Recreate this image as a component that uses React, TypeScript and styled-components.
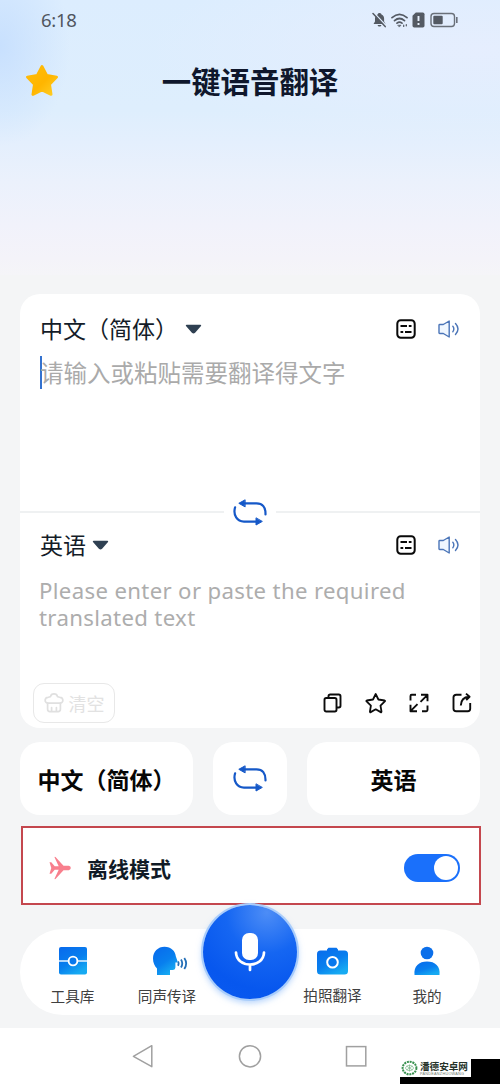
import React from 'react';
import styled, { createGlobalStyle } from 'styled-components';

const Global = createGlobalStyle`
  *, *::before, *::after { box-sizing: border-box; }
  body { margin: 0; background: #f4f5f6; font-family: "Noto Sans", "Noto Sans CJK SC", sans-serif; }
  svg { display: block; flex: none; }
`;

const Screen = styled.div`
  width: 500px;
  height: 1084px;
  display: flex;
  flex-direction: column;
  background: #f4f5f6;
  overflow: hidden;
`;

const Hero = styled.header`
  height: 275px;
  flex: none;
  background:
    radial-gradient(ellipse 70px 100px at 0 46px, #c8e0fe 0%, rgba(200, 224, 254, 0) 100%),
    radial-gradient(ellipse 330px 100px at 480px 50px, rgba(230, 238, 254, 0.95) 0%, rgba(230, 238, 254, 0) 100%),
    linear-gradient(180deg, #dcedfe 0%, #deeefd 40%, #e4effd 52%, #ebf1fc 66%, #f1f2fb 82%, #f4f3f9 94%, #f5f5f8 100%);
`;

const StatusBar = styled.div`
  height: 38px;
  padding: 2px 41px 0 41px;
  display: flex;
  align-items: center;
  justify-content: space-between;
`;

const Clock = styled.span`
  font: 400 18.5px/36px "Noto Sans", sans-serif;
  letter-spacing: -0.3px;
  color: #50565f;
`;

const StatusIcons = styled.div`
  display: flex;
  align-items: center;
  gap: 4px;
`;

const TitleBar = styled.div`
  display: grid;
  grid-template-columns: 84px 1fr 84px;
  align-items: center;
  height: 86px;
  svg { margin-left: 25px; }
`;

const Title = styled.h1`
  margin: 0 0 3px;
  text-align: center;
  font: 700 29.4px/44px "Noto Sans CJK SC", sans-serif;
  color: #0f172c;
  white-space: nowrap;
`;

const Card = styled.main`
  margin: 19px 20px 0;
  height: 434px;
  flex: none;
  border-radius: 20px;
  background: #fff;
  display: flex;
  flex-direction: column;
  position: relative;
`;

const Pane = styled.section<{ $height: number }>`
  height: ${(p) => p.$height}px;
  padding: 0 20px;
  display: flex;
  flex-direction: column;
  & + & { border-top: 2px solid #eff1f2; }
`;

const PaneHead = styled.div<{ $top: number }>`
  margin-top: ${(p) => p.$top}px;
  height: 36px;
  display: flex;
  align-items: center;
  justify-content: space-between;
`;

const Language = styled.div<{ $gap: number }>`
  display: flex;
  align-items: center;
  gap: ${(p) => p.$gap}px;
  font: 400 23px/34px "Noto Sans CJK SC", sans-serif;
  color: #141c28;
  white-space: nowrap;
  span { margin-bottom: 2px; }
`;

const PaneTools = styled.div`
  display: flex;
  align-items: center;
  gap: 22px;
`;

const Placeholder = styled.div`
  margin-top: 8px;
  height: 34px;
  display: flex;
  align-items: center;
  font: 400 23.5px/34px "Noto Sans CJK SC", sans-serif;
  color: #aaa;
  white-space: nowrap;
`;

const Caret = styled.span`
  width: 2.5px;
  height: 33px;
  margin: 0 -2px 0 -0.5px;
  background: #3472cf;
`;

const Translated = styled.p`
  margin: 14px 0 0 -1px;
  width: 390px;
  font: 400 22.2px/27px "Noto Sans", sans-serif;
  letter-spacing: 0.34px;
  color: #adadad;
`;

const SwapBadge = styled.div`
  position: absolute;
  left: 204px;
  top: 198px;
  width: 52px;
  height: 40px;
  display: flex;
  align-items: center;
  justify-content: center;
  background: #fff;
`;

const PaneFoot = styled.div`
  margin: auto -13px 5px -7px;
  height: 41px;
  display: flex;
  align-items: center;
  justify-content: space-between;
`;

const ClearButton = styled.button`
  width: 82px;
  height: 40px;
  padding: 0;
  display: flex;
  align-items: center;
  justify-content: center;
  gap: 5px;
  border: 1.5px solid #e8e8e8;
  border-radius: 11px;
  background: #fff;
  color: #e2e2e2;
  font: 400 18px/30px "Noto Sans CJK SC", sans-serif;
`;

const Actions = styled.div`
  display: flex;
  align-items: center;
  gap: 21px;
`;

const SwitchRow = styled.div`
  margin: 14px 20px 0;
  height: 73px;
  flex: none;
  display: grid;
  grid-template-columns: 173px 74px 173px;
  justify-content: space-between;
`;

const Tile = styled.button`
  border: 0;
  border-radius: 20px;
  background: #fff;
  padding: 0;
  display: flex;
  align-items: center;
  justify-content: center;
  color: #070707;
  font: 700 23px/36px "Noto Sans CJK SC", sans-serif;
  white-space: nowrap;
`;

const Offline = styled.section`
  margin: 11px 19px 0 21px;
  height: 79px;
  flex: none;
  padding: 4px 19px 0 26px;
  display: flex;
  align-items: center;
  border: 2px solid #c4474e;
  background: #fff;
`;

const OfflineLabel = styled.span`
  margin-left: 16px;
  flex: 1;
  font: 700 21px/32px "Noto Sans CJK SC", sans-serif;
  color: #101a26;
`;

const Toggle = styled.span`
  width: 56px;
  height: 28px;
  padding: 2px;
  display: flex;
  justify-content: flex-end;
  border-radius: 14px;
  background: #1a70fb;
  &::after { content: ""; width: 24px; height: 24px; border-radius: 50%; background: #fff; }
`;

const TabBar = styled.nav`
  margin: 24px 20px 0;
  height: 86px;
  flex: none;
  padding: 0 10px;
  display: grid;
  grid-template-columns: 85px 104px 62px 103px 86px;
  border-radius: 43px;
  background: #fff;
  position: relative;
`;

const Tab = styled.div<{ $column: number; $lift?: number; $nudge?: number }>`
  grid-column: ${(p) => p.$column};
  display: flex;
  flex-direction: column;
  align-items: center;
  padding-top: 17px;
  font: 400 14.6px/22px "Noto Sans CJK SC", sans-serif;
  color: #404040;
  white-space: nowrap;
  svg { margin: 0 0 ${(p) => 9 - (p.$lift || 0)}px ${(p) => p.$nudge || 0}px; }
`;

const MicButton = styled.button`
  position: absolute;
  left: 183px;
  top: -24px;
  width: 94px;
  height: 94px;
  padding: 0;
  display: flex;
  align-items: center;
  justify-content: center;
  border: 0;
  border-radius: 50%;
  background: radial-gradient(circle at 68% 8%, #4d8df6 0%, #1566f2 38%, #0757ee 72%, #0a5af0 100%);
  box-shadow: 0 0 0 2px #a9cdfb, 0 3px 6px 1px rgba(120, 175, 250, 0.55);
`;

const SystemBar = styled.footer`
  margin-top: 13px;
  height: 56px;
  flex: none;
  display: flex;
  gap: 83px;
  padding: 16px 0 0 131px;
  background: #fff;
  position: relative;
`;

const Watermark = styled.div`
  position: absolute;
  right: 0;
  bottom: 0;
  width: 100px;
  height: 25px;
  background: #000;
`;

const WatermarkPlate = styled.div`
  width: 71px;
  height: 18px;
  display: flex;
  align-items: center;
  gap: 2px;
  padding-left: 1px;
  background: #fff;
`;

const WatermarkText = styled.div`
  font: 700 9.6px/11px "Noto Sans CJK SC", sans-serif;
  color: #263329;
  white-space: nowrap;
  small { display: block; font: 400 3.8px/4px "Liberation Sans", sans-serif; letter-spacing: 0.25px; color: #6f7d72; }
`;

const Chevron = () => (
  <svg width="17" height="11" viewBox="0 0 17 11">
    <path d="M1.6 1.5h13.8L9.5 8.2q-1 1-2 0Z" fill="#2f4052" stroke="#2f4052" strokeWidth="1.6" strokeLinejoin="round" />
  </svg>
);

const NoteIcon = () => (
  <svg width="20" height="20" viewBox="0 0 20 20" fill="none" stroke="#090909" strokeWidth="2">
    <rect x="1.3" y="1.3" width="17.4" height="17.4" rx="3.4" />
    <path d="M4.5 7h6.500M12.800 7h2.700M4.500 13h2.700M9 13h6.500" />
  </svg>
);

const SpeakerIcon = () => (
  <svg width="22" height="18" viewBox="0 0 22 18" fill="none" stroke="#4b75b8" strokeWidth="1.4" strokeLinejoin="round" strokeLinecap="round">
    <path d="M1.7 4.5h3.6L11.2 1v16L5.3 13.5H1.7Q1 13.5 1 12.8V5.2q0-.7.7-.7Z" fill="#f0f7ff" />
    <path d="M14.8 6.2q2.1 2.8 0 5.6M17.5 3.6q5 5.4 0 10.8" />
  </svg>
);

const SwapIcon = () => (
  <svg width="34" height="27" viewBox="0 0 34 27" fill="none" stroke="#1558c8" strokeWidth="2.2" strokeLinecap="round">
    <path d="M11 4.3h12.500C29.500 4.300 32.700 8 32.500 15.500M2.100 8.300C-.2 16.300 4.200 22.600 11 22.600h12.500" />
    <path d="M11.800 1 5.800 4.300l6 3.400ZM23 19.200v6.800l6-3.400Z" fill="#1558c8" strokeWidth="1" strokeLinejoin="round" />
  </svg>
);

const TrashIcon = () => (
  <svg width="20" height="21" viewBox="0 0 20 21" fill="none" stroke="#e0e0e0" strokeWidth="1.7" strokeLinejoin="round" strokeLinecap="round">
    <path d="M3.6 11.2C.3 10.5.2 5.7 4.1 5.3 5 4.9 6 5 6.6 4.5 7 1 13 1 13.4 4.5c.6.5 1.600.4 2.500.8 3.900.4 3.800 5.200.5 5.900Z" />
    <path d="M3.6 11.2v6.1q0 2.300 2.300 2.300h8.200q2.300 0 2.300-2.300v-6.100M7.600 15.500v4M12.400 15.500v4" />
  </svg>
);

const App = () => (
  <Screen>
    <Global />
    <Hero>
      <StatusBar>
        <Clock>6:18</Clock>
        <StatusIcons>
          <svg width="15" height="16" viewBox="0 0 15 16">
            <path d="M7.500 1C9 1 9.300 2 9.500 2.400c2 .8 2.600 2.400 2.600 4.200v3l1.400 2.500H1.500L3 9.600v-3c0-2 1-3.500 2.600-4.200C5.800 1.700 6.500 1 7.500 1ZM5.600 13h3.800c-.3 2-3.500 2-3.800 0Z" fill="#545a63" />
            <path d="M2.300 1.200 14 13.600" stroke="#e0edfd" strokeWidth="1.500" />
            <path d="M1 1.600 13.200 14.600" stroke="#545a63" strokeWidth="1.500" strokeLinecap="round" />
          </svg>
          <svg width="17" height="15" viewBox="0 0 17 15" fill="none" stroke="#545a63" strokeWidth="1.700" strokeLinecap="round">
            <path d="M1 4.700q7.500-6.600 15 0M3.500 7.600q5-4.200 10 0M6 10.200q2.500-2 5 0" />
            <path d="M7 12.200h3l-1.500 1.600Z" fill="#545a63" strokeWidth=".6" />
            <path d="M12.700 12.200v1.200M15.300 11.600v1.200" strokeWidth="1.200" />
          </svg>
          <svg width="13" height="16" viewBox="0 0 13 16">
            <path d="M3.800.5h7q1.700 0 1.700 1.700v11.600q0 1.700-1.700 1.700H2.200Q.5 15.500.5 13.800v-10Z" fill="#545a63" />
            <path d="M6.500 4v5M6.500 11v2" stroke="#e8f1fd" strokeWidth="1.900" />
          </svg>
          <svg width="30" height="16" viewBox="-1 0 30 16">
            <rect x="1" y="1.500" width="23.500" height="13" rx="3" fill="none" stroke="#6a7079" strokeWidth="1.400" />
            <rect x="3.300" y="3.700" width="9.400" height="8.600" rx="1" fill="#545a63" />
            <path d="M26.800 5v6" stroke="#6a7079" strokeWidth="1.600" />
          </svg>
        </StatusIcons>
      </StatusBar>
      <TitleBar>
        <svg width="34" height="34" viewBox="0 0 34 34">
          <defs>
            <linearGradient id="gold" x1="0" y1="0" x2="1" y2="1">
              <stop offset="0" stopColor="#ffbd0a" />
              <stop offset=".55" stopColor="#ffb500" />
              <stop offset="1" stopColor="#ffcf25" />
            </linearGradient>
          </defs>
          <path d="m17 2.500 4.700 8.900 9.900 1.700-7 7.300 1.500 10-9.100-4.400-9.100 4.400 1.500-10-7-7.300 9.900-1.700Z" fill="url(#gold)" stroke="url(#gold)" strokeWidth="2.800" strokeLinejoin="round" />
        </svg>
        <Title>一键语音翻译</Title>
      </TitleBar>
    </Hero>

    <Card>
      <Pane $height={217}>
        <PaneHead $top={17}>
          <Language $gap={7}><span>中文（简体）</span><Chevron /></Language>
          <PaneTools><NoteIcon /><SpeakerIcon /></PaneTools>
        </PaneHead>
        <Placeholder><Caret />请输入或粘贴需要翻译得文字</Placeholder>
      </Pane>
      <Pane $height={217}>
        <PaneHead $top={14}>
          <Language $gap={6}><span>英语</span><Chevron /></Language>
          <PaneTools><NoteIcon /><SpeakerIcon /></PaneTools>
        </PaneHead>
        <Translated>Please enter or paste the required translated text</Translated>
        <PaneFoot>
          <ClearButton><TrashIcon />清空</ClearButton>
          <Actions>
            <svg width="22" height="22" viewBox="0 0 22 22" fill="none" stroke="#0c0c0c" strokeWidth="1.900" strokeLinejoin="round">
              <rect x="2.500" y="6" width="12" height="13.500" rx="1.700" />
              <path d="M6.500 5.700V4.200q0-1.700 1.700-1.700h8.600Q18.500 2.500 18.500 4.200v9.600q0 1.700-1.700 1.700H15" />
            </svg>
            <svg width="22" height="22" viewBox="0 0 22 22" fill="none" stroke="#0c0c0c" strokeWidth="1.800" strokeLinejoin="round">
              <path d="m10.700 2 2.700 5.500 6.200 1q.8.2.2.900l-4.300 4.200 1 6q0 .9-.8.500l-5-2.800-5 2.800q-.8.400-.8-.5l1-6L1.600 9.400q-.6-.7.200-.9l6.200-1Z" />
            </svg>
            <svg width="22" height="22" viewBox="0 0 22 22" fill="none" stroke="#0c0c0c" strokeWidth="1.900" strokeLinejoin="round">
              <path d="M2.500 8.500V4q0-1.200 1.200-1.200H8M13 2.800h6.500v6.400M19.500 2.800l-7 7M2.500 12.700v6.500H9M2.500 19.200l7-7M19.500 13.500V18q0 1.200-1.200 1.200H14" />
            </svg>
            <svg width="22" height="22" viewBox="0 0 22 22" fill="none" stroke="#0c0c0c" strokeWidth="1.900" strokeLinejoin="round">
              <path d="M10.500 2.800H5.300q-2.800 0-2.800 2.500v11.400q0 2.500 2.800 2.500h11.400q2.500 0 2.500-2.500V11" />
              <path d="M9.800 13.500C10 8 12.500 5 18 4.700M15 1.600l3.600 3.100L15.200 8" />
            </svg>
          </Actions>
        </PaneFoot>
      </Pane>
      <SwapBadge><SwapIcon /></SwapBadge>
    </Card>

    <SwitchRow>
      <Tile>中文（简体）</Tile>
      <Tile><SwapIcon /></Tile>
      <Tile>英语</Tile>
    </SwitchRow>

    <Offline>
      <svg width="22" height="24" viewBox="0 0 22 24">
        <path d="M.5 6.200h1.800l3.400 4h4L5.500 1.300Q5.500.6 6.500 1l8 8.800h5.300q2 .6 2 2.200t-2 2.200h-5.300l-8 8.800q-1 .4-1-.3l4.200-8.900h-4l-3.400 4H.5L2.300 12Z" fill="#f87f8d" />
      </svg>
      <OfflineLabel>离线模式</OfflineLabel>
      <Toggle />
    </Offline>

    <TabBar>
      <Tab $column={1}>
        <svg width="30" height="30" viewBox="0 0 30 30">
          <defs>
            <linearGradient id="blue" x1="0" y1="0" x2=".6" y2="1">
              <stop offset="0" stopColor="#0869ec" />
              <stop offset=".6" stopColor="#087fee" />
              <stop offset="1" stopColor="#16aaf2" />
            </linearGradient>
          </defs>
          <rect x="1" y="1" width="28" height="27.500" rx="2" fill="url(#blue)" />
          <path d="M1 15h9M20 15h9" stroke="#e8f5ff" strokeWidth="1.700" />
          <circle cx="15" cy="15" r="4.400" fill="#0878ed" stroke="#fff" strokeWidth="1.900" />
        </svg>
        工具库
      </Tab>
      <Tab $column={2} $nudge={6}>
        <svg width="36" height="30" viewBox="0 0 36 30">
          <path d="M12.500.8c6.700 0 11 4.500 11.300 9.500l1.800 5.200q.2.900-1 1.100h-1.200v5q0 2.400-2.400 2.400H18V29H5v-6.500C2.500 20 1 16.500 1 12.500 1 5.600 6 .8 12.500.8Z" fill="url(#blue)" />
          <path d="M26 15.500q1.200 2 0 4.200M29 13.500q2.500 4 0 8M32.300 12q3.700 5.500 0 11" fill="none" stroke="#246fb7" strokeWidth="1.800" />
        </svg>
        同声传译
      </Tab>
      <Tab $column={4} $lift={1}>
        <svg width="33" height="30" viewBox="0 0 33 30">
          <path d="m11 3.500 1.500-1.700h8L22 3.500v1h6.500q3.500 0 3.500 3.500v17q0 3.500-3.500 3.500h-24Q1 28.500 1 25V8q0-3.500 3.500-3.500H11Z" fill="url(#blue)" />
          <circle cx="16.500" cy="16.300" r="5.300" fill="#0878ed" stroke="#fff" strokeWidth="2" />
        </svg>
        拍照翻译
      </Tab>
      <Tab $column={5}>
        <svg width="28" height="30" viewBox="0 0 28 30">
          <circle cx="14" cy="7" r="6.300" fill="#0b6fea" />
          <path d="M1.500 29C.5 20 6 15.500 14 15.500S27.500 20 26.500 29Z" fill="url(#blue)" />
        </svg>
        我的
      </Tab>
      <MicButton>
        <svg width="34" height="46" viewBox="0 0 34 46" fill="none">
          <rect x="9" y="4" width="16" height="27" rx="7" fill="#fff" />
          <path d="M3 23.500C3.500 39.500 30.500 39.500 31 23.500M17 35.500v5.500" stroke="#fff" strokeWidth="2.700" strokeLinecap="round" />
        </svg>
      </MicButton>
    </TabBar>

    <SystemBar>
      <svg width="24" height="24" viewBox="0 0 24 24" fill="none" stroke="#a0a0a0" strokeWidth="1.500" strokeLinejoin="round">
        <path d="M20.800 1.700v21L2.400 12.300Z" />
      </svg>
      <svg width="24" height="24" viewBox="0 0 24 24" fill="none" stroke="#a0a0a0" strokeWidth="1.500">
        <circle cx="12" cy="12.300" r="10.600" />
      </svg>
      <svg width="24" height="24" viewBox="0 0 24 24" fill="none" stroke="#a0a0a0" strokeWidth="1.500">
        <rect x="1.500" y="2.600" width="19.300" height="19.300" />
      </svg>
      <Watermark>
        <WatermarkPlate>
          <svg width="17" height="16" viewBox="0 0 17 16" fill="none" stroke="#3a9150">
            <ellipse cx="8.500" cy="8" rx="6.900" ry="6.300" strokeWidth="2" strokeDasharray="2 .8" />
            <path d="M4.500 8c1-3.500 7-3.500 8 0-1 3.500-7 3.500-8 0ZM8.500 4.500v7M5.500 6l6 4M11.500 6l-6 4" stroke="#79b586" strokeWidth=".7" />
          </svg>
          <WatermarkText>潘德安卓网<small>PANDEANZHUOWANG</small></WatermarkText>
        </WatermarkPlate>
      </Watermark>
    </SystemBar>
  </Screen>
);

export default App;
